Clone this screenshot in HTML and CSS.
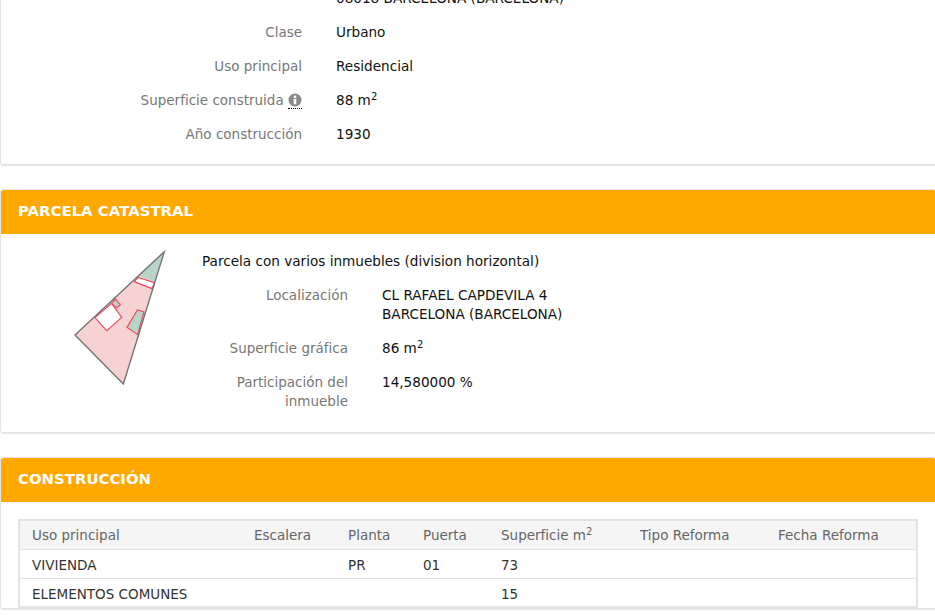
FILE: index.html
```html
<!DOCTYPE html>
<html lang="es">
<head>
  <meta charset="UTF-8"/>
  <title>Datos del inmueble</title>
  <meta name="viewport" content="width=device-width, initial-scale=1.0"/>
  <link rel="stylesheet" href="styles.css">
</head>
<body>

<div class="page">
  <div class="panel panel-first">
    <div class="body">
      <div class="row">
        <div class="label">Localización</div>
        <div class="value">CL RAFAEL CAPDEVILA 4<br>08018 BARCELONA (BARCELONA)</div>
      </div>
      <div class="row">
        <div class="label">Clase</div>
        <div class="value">Urbano</div>
      </div>
      <div class="row">
        <div class="label">Uso principal</div>
        <div class="value">Residencial</div>
      </div>
      <div class="row">
        <div class="label">Superficie construida
          <abbr class="info" title="Información">
            <svg viewBox="0 0 14 14" width="14" height="14"><circle cx="7" cy="7" r="6.5" fill="#888"/><rect x="5.7" y="2.6" width="2.6" height="2.3" fill="#fff"/><rect x="5.7" y="5.9" width="2.6" height="5.4" fill="#fff"/></svg>
          </abbr>
        </div>
        <div class="value">88 m<sup>2</sup></div>
      </div>
      <div class="row">
        <div class="label">Año construcción</div>
        <div class="value">1930</div>
      </div>
    </div>
  </div>

  <div class="panel">
    <h2 class="title">PARCELA CATASTRAL</h2>
    <div class="body parcela">
      <svg class="plano" viewBox="0 0 390 465" width="130" height="155">
        <polygon points="340,35 72,285 217,432" fill="#f6d2d2"/>
        <polygon points="340,35 265,108 310,125" fill="#b8d4c8"/>
        <polygon points="262,112 250,125 303,146 310,128" fill="#fff" stroke="#f0485f" stroke-width="3.5"/>
        <polygon points="182,190 132,233 167,272 212,232" fill="#fff" stroke="#f0485f" stroke-width="3.5"/>
        <polygon points="182,190 193,177 208,195 197,203" fill="#b8d4c8" stroke="#f0485f" stroke-width="3.5"/>
        <polygon points="228,262 259,210 279,216 260,284" fill="#b8d4c8" stroke="#f0485f" stroke-width="3.5"/>
        <polygon points="340,35 72,285 217,432" fill="none" stroke="#707070" stroke-width="4"/>
      </svg>
      <div class="datos">
        <p class="nota">Parcela con varios inmuebles (division horizontal)</p>
        <div class="row row-sm">
          <div class="label">Localización</div>
          <div class="value">CL RAFAEL CAPDEVILA 4<br>BARCELONA (BARCELONA)</div>
        </div>
        <div class="row row-sm">
          <div class="label">Superficie gráfica</div>
          <div class="value">86 m<sup>2</sup></div>
        </div>
        <div class="row row-sm">
          <div class="label">Participación del inmueble</div>
          <div class="value">14,580000 %</div>
        </div>
      </div>
    </div>
  </div>

  <div class="panel">
    <h2 class="title">CONSTRUCCIÓN</h2>
    <div class="body tabla-wrap">
      <table class="tabla">
        <thead>
          <tr>
            <th>Uso principal</th>
            <th>Escalera</th>
            <th>Planta</th>
            <th>Puerta</th>
            <th>Superficie m<sup>2</sup></th>
            <th>Tipo Reforma</th>
            <th>Fecha Reforma</th>
          </tr>
        </thead>
        <tbody>
          <tr><td>VIVIENDA</td><td></td><td>PR</td><td>01</td><td>73</td><td></td><td></td></tr>
          <tr><td>ELEMENTOS COMUNES</td><td></td><td></td><td></td><td>15</td><td></td><td></td></tr>
        </tbody>
      </table>
    </div>
  </div>
</div>

</body>
</html>
```

FILE: styles.css
```css
:root {
  --naranja: #ffa800;
  --borde: #e3e3e3;
  --gris: #777;
  --texto: #111;
}
* {
  margin: 0; padding: 0; box-sizing: border-box;
}
html, body {
  height: 100%;
  overflow: hidden;
}
body {
  background: #fff;
  color: var(--texto);
  font-family: "DejaVu Sans", sans-serif;
  font-size: 13.5px;
  line-height: 19px;
}
.page {
  margin-top: -47px;
  margin-right: -2px;
}
.panel {
  background: #fff;
  border: 1px solid var(--borde);
  border-bottom-width: 2px;
  border-radius: 4px;
  margin-bottom: 23px;
  overflow: hidden;
}
.title {
  background: var(--naranja);
  color: #fff;
  font-size: 14.9px;
  font-weight: bold;
  line-height: 43px;
  padding: 0 0 1px 17px;
}
.body {
  padding: 8px 0 13px;
}
.row {
  display: flex;
  gap: 34px;
  padding: 7.5px 0;
}
.label {
  color: var(--gris);
  text-align: right;
  width: 301px;
  flex-shrink: 0;
  line-height: 19px;
}
.value, .nota {
  font-size: 13.6px;
}
.info {
  display: inline-block;
  vertical-align: top;
  height: 18px;
  border-bottom: 1px dotted #000;
}
.info svg {
  display: block;
  margin-top: 2px;
}
sup {
  font-size: 10px;
  line-height: 0;
  vertical-align: 5px;
}
.parcela {
  display: flex;
  padding: 6px 0 14px 50px;
}
.plano {
  flex-shrink: 0;
}
.datos {
  margin-left: 21px;
  padding-top: 12px;
}
.nota {
  margin-bottom: 7px;
}
.row-sm .label {
  width: 146px;
}
.tabla-wrap {
  padding: 17px 17px 0;
}
.tabla {
  width: 900px;
  table-layout: fixed;
  border-collapse: collapse;
  border: 2px solid var(--borde);
}
.tabla th, .tabla td {
  height: 29px;
  padding: 2px 12px 0;
  text-align: left;
  font-weight: normal;
  border-bottom: 1px solid var(--borde);
}
.tabla th {
  background: #f5f5f5;
  color: #666;
}
.tabla td {
  padding-top: 4px;
  color: #333;
}
.tabla th:nth-child(1) { width: 223px; }
.tabla th:nth-child(2) { width: 94px; }
.tabla th:nth-child(3) { width: 75px; }
.tabla th:nth-child(4) { width: 78px; }
.tabla th:nth-child(5) { width: 139px; }
.tabla th:nth-child(6) { width: 138px; }
```
